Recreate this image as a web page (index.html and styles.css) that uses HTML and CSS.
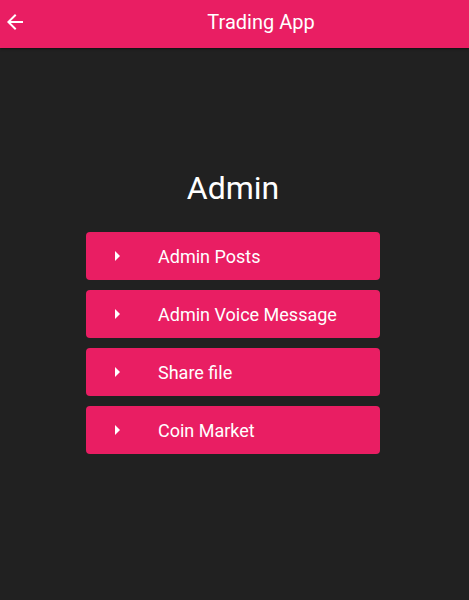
FILE: index.html
```html
<!DOCTYPE html>
<html>
<head>
<meta charset="utf-8">
<link rel="stylesheet" href="styles.css">
</head>
<body>
<header class="appbar">
  <button class="back" aria-label="Back">
    <svg width="24" height="24" viewBox="0 0 24 24"><path fill="#fff" d="M20 11H7.83l5.59-5.59L12 4l-8 8 8 8 1.41-1.41L7.83 13H20v-2z"/></svg>
  </button>
  <h1 class="title">Trading App</h1>
</header>
<main class="content">
  <h2 class="heading">Admin</h2>
  <div class="list">
    <a class="item"><svg class="icon" width="24" height="24" viewBox="0 0 24 24"><path fill="#fff" d="M10 17l5-5-5-5v10z"/></svg><span>Admin Posts</span></a>
    <a class="item"><svg class="icon" width="24" height="24" viewBox="0 0 24 24"><path fill="#fff" d="M10 17l5-5-5-5v10z"/></svg><span>Admin Voice Message</span></a>
    <a class="item"><svg class="icon" width="24" height="24" viewBox="0 0 24 24"><path fill="#fff" d="M10 17l5-5-5-5v10z"/></svg><span>Share file</span></a>
    <a class="item"><svg class="icon" width="24" height="24" viewBox="0 0 24 24"><path fill="#fff" d="M10 17l5-5-5-5v10z"/></svg><span>Coin Market</span></a>
  </div>
</main>
</body>
</html>
```
FILE: styles.css
```css
* { box-sizing: border-box; }
html, body { margin: 0; padding: 0; }
body {
  background: #212121;
  font-family: Roboto, "Noto Sans", sans-serif;
  color: #fff;
  width: 469px;
  height: 600px;
  overflow: hidden;
}
.appbar {
  height: 48px;
  background: #E91E63;
  display: flex;
  align-items: center;
  padding-bottom: 5px;
  box-shadow: 0 1px 2px rgba(0,0,0,0.5);
}
.back {
  width: 56px;
  height: 24px;
  border: 0;
  background: transparent;
  padding: 0 0 0 3px;
  display: flex;
  align-items: center;
  justify-content: flex-start;
}
.back svg { display: block; }
.title {
  flex: 1;
  margin: 0 0 0 -3px;
  text-align: center;
  font-size: 20px;
  font-weight: 400;
  line-height: 24px;
}
.content {
  display: flex;
  flex-direction: column;
  align-items: center;
  padding-top: 120px;
}
.heading {
  margin: 0 0 24px -3px;
  font-size: 32px;
  font-weight: 400;
  line-height: 40px;
}
.list {
  display: flex;
  flex-direction: column;
  gap: 10px;
  width: 294px;
  margin-left: -3px;
}
.item {
  height: 48px;
  background: #E91E63;
  border-radius: 4px;
  display: flex;
  align-items: center;
  padding-left: 19px;
  font-size: 18px;
  font-weight: 400;
  color: #fff;
}
.icon { display: block; margin-right: 29px; flex-shrink: 0; }
```
